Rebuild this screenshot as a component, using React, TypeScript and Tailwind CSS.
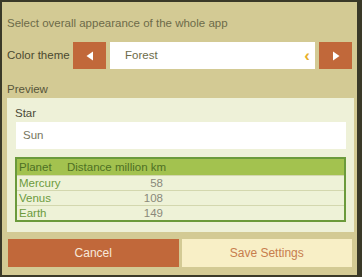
import React from 'react'

const planets = [
  { name: 'Mercury', distance: 58 },
  { name: 'Venus', distance: 108 },
  { name: 'Earth', distance: 149 },
]

function Arrow({ dir }: { dir: 'left' | 'right' }) {
  return (
    <svg width="10" height="12" viewBox="0 0 10 12" aria-hidden="true">
      {dir === 'left' ? <polygon points="8,1.5 8,10.5 1.5,6" fill="#fff" /> : <polygon points="2,1.5 2,10.5 8.5,6" fill="#fff" />}
    </svg>
  )
}

export default function App() {
  return (
    <div
      className="flex h-[277px] w-[362px] flex-col border-y-2 border-l-2 border-r-[5px] border-[#3a3928] bg-[#d3ca94] pl-[5px] pr-[3px] text-[11.5px]"
      style={{ fontFamily: '"Liberation Sans", Arial, sans-serif' }}
    >
      <div className="mt-[13px] h-[16px] leading-[16px] text-[#6d6b49]">Select overall appearance of the whole app</div>

      <div className="mt-[11px] flex h-[27px] items-center pr-[2px]">
        <span className="w-[66px] text-[#4b4930]">Color theme</span>
        <button type="button" className="flex h-[27px] w-[33px] items-center justify-center bg-[#c1683a]">
          <Arrow dir="left" />
        </button>
        <div className="ml-[4px] flex h-[27px] flex-1 items-center justify-between bg-white pl-[15px] pr-[5px] text-[#6d6b49]">
          <span>Forest</span>
          <span className="text-[17px] font-bold leading-none text-[#e8b02a]">‹</span>
        </div>
        <button type="button" className="ml-[4px] flex h-[27px] w-[33px] items-center justify-center bg-[#c1683a]">
          <Arrow dir="right" />
        </button>
      </div>

      <div className="mt-[12px] h-[16px] leading-[16px] text-[#57553a]">Preview</div>

      <div className="mt-[1px] h-[134px] bg-[#eef1d8] pl-[8px] pr-[8px]">
        <div className="mt-[7px] h-[16px] leading-[16px] text-[#4b4a38]">Star</div>
        <div className="ml-[1px] mt-[1px] flex h-[27px] items-center bg-white pl-[7px] text-[#77755d]">Sun</div>
        <div className="mt-[8px] border-2 border-[#6b9a3b]">
          <div className="grid h-[16px] grid-cols-[50px_96px_1fr] items-center bg-[#a3c24f] leading-[16px] text-[#4e7024]">
            <span className="pl-[2px]">Planet</span>
            <span className="whitespace-nowrap">Distance million km</span>
            <span />
          </div>
          {planets.map((p) => (
            <div
              key={p.name}
              className="grid h-[15px] grid-cols-[50px_96px_1fr] items-center border-t border-[#d3d7ae] bg-[#eef2d7] leading-[14px]"
            >
              <span className="pl-[2px] text-[#6c9a3d]">{p.name}</span>
              <span className="text-right text-[#8a897a]">{p.distance}</span>
              <span />
            </div>
          ))}
        </div>
      </div>

      <div className="mt-[7px] flex h-[28px] gap-[3px] pl-[1px] pr-[2px]">
        <button type="button" className="flex-1 bg-[#c1683a] text-[12px] text-[#f7e8da]">
          Cancel
        </button>
        <button type="button" className="flex-1 bg-[#f8efc6] text-[12px] text-[#c77d4d]">
          Save Settings
        </button>
      </div>
    </div>
  )
}
